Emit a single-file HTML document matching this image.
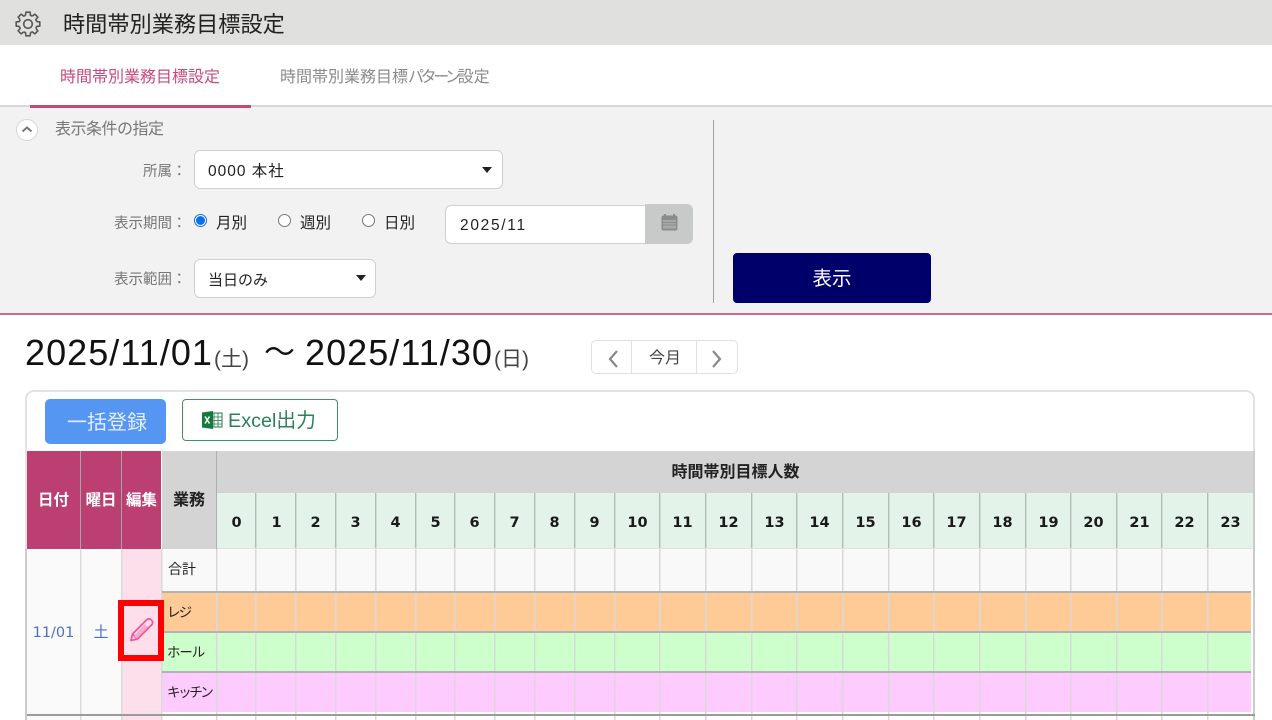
<!DOCTYPE html>
<html lang="ja"><head><meta charset="utf-8"><title>時間帯別業務目標設定</title>
<style>
html,body{margin:0;padding:0;background:#fff;overflow:hidden;width:1272px;height:720px}
#w{width:1272px;height:720px;overflow:hidden;position:relative;font-family:"Liberation Sans","Noto Sans CJK JP",sans-serif;color:#222}
.a{position:absolute}
.t{position:absolute;white-space:nowrap;line-height:1}
.c{position:absolute;text-align:center;white-space:nowrap;line-height:1}
.h{font-family:"DejaVu Sans",sans-serif;font-weight:bold;font-size:14.5px;top:516px;color:#1a1a1a}
.v{position:absolute;top:549px;height:171px;width:1px;background:#d9d9d9;box-shadow:1px 0 0 rgba(217,217,217,.5)}
.vh{position:absolute;top:493px;height:55px;width:1px;background:#b4bcb7;box-shadow:1px 0 0 rgba(180,188,183,.4)}
.sel{position:absolute;background:#fff;border:1px solid #cfcfcf;border-radius:6px;box-sizing:border-box}
.arr{position:absolute;width:0;height:0;border-left:5px solid transparent;border-right:5px solid transparent;border-top:6px solid #222}
.lb{color:#777;font-size:14.5px}
.rd{position:absolute;width:13px;height:13px;border:1px solid #777;border-radius:50%;background:#fff;box-sizing:border-box}
.k{letter-spacing:-3.4px}
</style></head><body><div id="w">

<div class="a" style="left:0;top:0;width:1272px;height:45px;background:#e0e0de"></div>
<svg class="a" style="left:15px;top:11px" width="26" height="26" viewBox="-13 -13 26 26" fill="none" stroke="#555" stroke-width="1.6" stroke-linejoin="round">
<path d="M-2.480-8.650L-2.080-11.820H2.080L2.480-8.650L4.360-7.870"/>
<path transform="rotate(45)" d="M-2.480-8.650L-2.080-11.820H2.080L2.480-8.650L4.360-7.870"/>
<path transform="rotate(90)" d="M-2.480-8.650L-2.080-11.820H2.080L2.480-8.650L4.360-7.870"/>
<path transform="rotate(135)" d="M-2.480-8.650L-2.080-11.820H2.080L2.480-8.650L4.360-7.870"/>
<path transform="rotate(180)" d="M-2.480-8.650L-2.080-11.820H2.080L2.480-8.650L4.360-7.870"/>
<path transform="rotate(225)" d="M-2.480-8.650L-2.080-11.820H2.080L2.480-8.650L4.360-7.870"/>
<path transform="rotate(270)" d="M-2.480-8.650L-2.080-11.820H2.080L2.480-8.650L4.360-7.870"/>
<path transform="rotate(315)" d="M-2.480-8.650L-2.080-11.820H2.080L2.480-8.650L4.360-7.870"/>
<circle r="4.300"/></svg>
<div class="t" style="left:63px;top:14px;font-size:22.2px;color:#222">時間帯別業務目標設定</div>

<div class="t" style="left:60px;top:70px;font-size:16px;color:#c9487c">時間帯別業務目標設定</div>
<div class="t" style="left:280px;top:70px;font-size:16px;color:#8a8a8a">時間帯別業務目標<span class="k">パターン</span>設定</div>

<div class="a" style="left:0;top:105px;width:1272px;height:208px;background:#f2f2f2"></div>
<div class="a" style="left:0;top:105px;width:1272px;height:2px;background:#d8d8d8"></div>
<div class="a" style="left:30px;top:105px;width:221px;height:3px;background:#c04a78"></div>
<div class="a" style="left:0;top:313px;width:1272px;height:2px;background:#cf6a92"></div>

<div class="a" style="left:16px;top:119px;width:22px;height:22px;border-radius:50%;background:#fff;border:1px solid #d6d6d6;box-sizing:border-box"></div>
<svg class="a" style="left:16px;top:119px" width="22" height="22" viewBox="0 0 22 22" fill="none" stroke="#777" stroke-width="2"><path d="M6.500 12.500L11 8.500l4.500 4"/></svg>
<div class="t" style="left:55px;top:122px;font-size:16px;color:#777;letter-spacing:-.5px">表示条件の指定</div>

<div class="t lb" style="left:143px;top:165px">所属：</div>
<div class="sel" style="left:194px;top:150px;width:309px;height:39px"></div>
<div class="t" style="left:208px;top:164px;font-size:15.500px;color:#222;letter-spacing:1px">0000 本社</div>
<div class="arr" style="left:482px;top:167px"></div>

<div class="t lb" style="left:114px;top:217px">表示期間：</div>
<div class="rd" style="left:194px;top:214px;border:1px solid #0a6fe8"></div>
<div class="a" style="left:196px;top:216px;width:9px;height:9px;border-radius:50%;background:#0a6fe8"></div>
<div class="t" style="left:216px;top:216px;font-size:15.500px">月別</div>
<div class="rd" style="left:278px;top:214px"></div>
<div class="t" style="left:300px;top:216px;font-size:15.500px">週別</div>
<div class="rd" style="left:362px;top:214px"></div>
<div class="t" style="left:384px;top:216px;font-size:15.500px">日別</div>

<div class="sel" style="left:445px;top:205px;width:210px;height:39px;border-radius:6px 0 0 6px"></div>
<div class="t" style="left:460px;top:218px;font-size:15.500px;letter-spacing:1.700px">2025/11</div>
<div class="a" style="left:645px;top:204px;width:48px;height:40px;background:#c8c9c9;border-radius:0 6px 6px 0"></div>
<svg class="a" style="left:660px;top:213px" width="19" height="19" viewBox="0 0 19 19"><rect x="1.500" y="2.500" width="16" height="15" rx="2" fill="#8b8b8b"/><rect x="4" y="1" width="2" height="3" fill="#8b8b8b"/><rect x="13" y="1" width="2" height="3" fill="#8b8b8b"/><rect x="3" y="7" width="13" height="8.500" fill="#a8a8a8"/><path d="M3 9.500h13M3 12h13" stroke="#8b8b8b"/></svg>

<div class="t lb" style="left:114px;top:273px">表示範囲：</div>
<div class="sel" style="left:194px;top:259px;width:182px;height:39px"></div>
<div class="t" style="left:208px;top:273px;font-size:15px">当日のみ</div>
<div class="arr" style="left:356px;top:275px"></div>

<div class="a" style="left:713px;top:120px;width:1px;height:183px;background:#a0a0a0"></div>
<div class="a" style="left:733px;top:253px;width:198px;height:50px;background:#00006b;border-radius:4px"></div>
<div class="c" style="left:733px;top:270px;width:198px;font-size:19.500px;color:#fff">表示</div>

<div class="t" style="left:25px;top:335px;font-size:36px;color:#111;letter-spacing:1.050px">2025/11/01</div>
<div class="t" style="left:214px;top:349px;font-size:21px;color:#444">(土)</div>
<div class="t" style="left:264px;top:337px;font-size:31px;color:#111">～</div>
<div class="t" style="left:305px;top:335px;font-size:36px;color:#111;letter-spacing:1.050px">2025/11/30</div>
<div class="t" style="left:494px;top:349px;font-size:21px;color:#444">(日)</div>

<div class="a" style="left:591px;top:340px;width:147px;height:34px;border:1px solid #e0e0e0;border-radius:5px;box-sizing:border-box"></div>
<div class="a" style="left:631px;top:340px;width:1px;height:34px;background:#e0e0e0"></div>
<div class="a" style="left:696px;top:340px;width:1px;height:34px;background:#e0e0e0"></div>
<svg class="a" style="left:605px;top:349px" width="16" height="20" viewBox="0 0 16 20" fill="none" stroke="#888" stroke-width="2.200"><path d="M12 2L5 10l7 8"/></svg>
<svg class="a" style="left:709px;top:349px" width="16" height="20" viewBox="0 0 16 20" fill="none" stroke="#888" stroke-width="2.200"><path d="M4 2l7 8-7 8"/></svg>
<div class="c" style="left:633px;top:351px;width:64px;font-size:16px;color:#444">今月</div>

<div class="a" style="left:25px;top:390px;width:1230px;height:340px;border:2px solid #e2e2e2;border-radius:9px;box-sizing:border-box"></div>

<div class="a" style="left:45px;top:399px;width:121px;height:45px;background:#5596f2;border-radius:5px"></div>
<div class="c" style="left:45px;top:413px;width:124px;font-size:20px;color:#e4eefc">一括登録</div>
<div class="a" style="left:182px;top:399px;width:156px;height:42px;border:1px solid #3f9168;border-radius:4px;box-sizing:border-box;background:#fff"></div>
<svg class="a" style="left:202px;top:410px" width="21" height="20" viewBox="0 0 21 20"><rect x="8" y="3" width="12" height="14" fill="#fff" stroke="#1f7a45"/><path d="M12 3v14M16 3v14M8 7h12M8 10.500h12M8 14h12" stroke="#1f7a45" stroke-width=".8"/><path d="M0 2.500L11 1v18L0 17.500z" fill="#157a3c"/><path d="M3 6.500l4.500 7M7.500 6.500l-4.500 7" stroke="#fff" stroke-width="1.500"/></svg>
<div class="t" style="left:228px;top:412px;font-size:19.800px;color:#2b8258">Excel出力</div>

<!-- table header -->
<div class="a" style="left:27px;top:451px;width:134px;height:98px;background:#bc3f71"></div>
<div class="a" style="left:80px;top:451px;width:1px;height:98px;background:#a5a5a5"></div>
<div class="a" style="left:121px;top:451px;width:1px;height:98px;background:#a5a5a5"></div>
<div class="a" style="left:162px;top:451px;width:1093px;height:42px;background:#d3d4d3"></div>
<div class="a" style="left:162px;top:493px;width:54px;height:56px;background:#d3d4d3"></div>
<div class="a" style="left:216px;top:451px;width:1px;height:98px;background:#b0b0b0"></div>
<div class="a" style="left:217px;top:493px;width:1037px;height:55px;background:#e3f3e9"></div>
<div class="a" style="left:217px;top:548px;width:1037px;height:2px;background:#dfe4e1"></div>
<div class="a" style="left:1253px;top:451px;width:2px;height:269px;background:#cbcbcb"></div>

<div class="c" style="left:27px;top:493px;width:53px;font-size:15.500px;font-weight:bold;color:#fff">日付</div>
<div class="c" style="left:81px;top:493px;width:40px;font-size:15.500px;font-weight:bold;color:#fff">曜日</div>
<div class="c" style="left:122px;top:493px;width:39px;font-size:15.500px;font-weight:bold;color:#fff">編集</div>
<div class="c" style="left:162px;top:493px;width:54px;font-size:16px;font-weight:bold;color:#222">業務</div>
<div class="c" style="left:217px;top:465px;width:1037px;font-size:16px;font-weight:bold;color:#222">時間帯別目標人数</div>

<div class="c h" style="left:217px;width:39px">0</div>
<div class="c h" style="left:257px;width:39px">1</div>
<div class="c h" style="left:296px;width:39px">2</div>
<div class="c h" style="left:336px;width:39px">3</div>
<div class="c h" style="left:376px;width:39px">4</div>
<div class="c h" style="left:416px;width:39px">5</div>
<div class="c h" style="left:455px;width:39px">6</div>
<div class="c h" style="left:495px;width:39px">7</div>
<div class="c h" style="left:535px;width:39px">8</div>
<div class="c h" style="left:575px;width:39px">9</div>
<div class="c h" style="left:615px;width:45px">10</div>
<div class="c h" style="left:660px;width:45px">11</div>
<div class="c h" style="left:706px;width:45px">12</div>
<div class="c h" style="left:752px;width:45px">13</div>
<div class="c h" style="left:797px;width:45px">14</div>
<div class="c h" style="left:843px;width:45px">15</div>
<div class="c h" style="left:889px;width:45px">16</div>
<div class="c h" style="left:934px;width:45px">17</div>
<div class="c h" style="left:980px;width:45px">18</div>
<div class="c h" style="left:1026px;width:45px">19</div>
<div class="c h" style="left:1071px;width:45px">20</div>
<div class="c h" style="left:1117px;width:45px">21</div>
<div class="c h" style="left:1162px;width:45px">22</div>
<div class="c h" style="left:1208px;width:45px">23</div>

<!-- body -->
<div class="a" style="left:27px;top:549px;width:94px;height:171px;background:#fafafa"></div>
<div class="a" style="left:121px;top:549px;width:41px;height:171px;background:#fcdfeb"></div>
<div class="a" style="left:162px;top:549px;width:1091px;height:42px;background:#f9f9f9"></div>
<div class="a" style="left:162px;top:593px;width:1089px;height:38px;background:#fecb96"></div>
<div class="a" style="left:162px;top:633px;width:1089px;height:38px;background:#ccffcc"></div>
<div class="a" style="left:162px;top:673px;width:1089px;height:39px;background:#fecbff"></div>

<div class="v" style="left:80px;width:1px"></div><div class="v" style="left:121px;width:1px"></div><div class="v" style="left:161px"></div><div class="v" style="left:216px"></div>
<div class="v" style="left:255px"></div><div class="v" style="left:295px"></div><div class="v" style="left:335px"></div><div class="v" style="left:375px"></div><div class="v" style="left:415px"></div><div class="v" style="left:454px"></div><div class="v" style="left:494px"></div><div class="v" style="left:534px"></div><div class="v" style="left:574px"></div><div class="v" style="left:614px"></div><div class="v" style="left:659px"></div><div class="v" style="left:705px"></div><div class="v" style="left:751px"></div><div class="v" style="left:796px"></div><div class="v" style="left:842px"></div><div class="v" style="left:888px"></div><div class="v" style="left:933px"></div><div class="v" style="left:979px"></div><div class="v" style="left:1025px"></div><div class="v" style="left:1070px"></div><div class="v" style="left:1116px"></div><div class="v" style="left:1161px"></div><div class="v" style="left:1207px"></div>

<div class="vh" style="left:255px"></div><div class="vh" style="left:295px"></div><div class="vh" style="left:335px"></div><div class="vh" style="left:375px"></div><div class="vh" style="left:415px"></div><div class="vh" style="left:454px"></div><div class="vh" style="left:494px"></div><div class="vh" style="left:534px"></div><div class="vh" style="left:574px"></div><div class="vh" style="left:614px"></div><div class="vh" style="left:659px"></div><div class="vh" style="left:705px"></div><div class="vh" style="left:751px"></div><div class="vh" style="left:796px"></div><div class="vh" style="left:842px"></div><div class="vh" style="left:888px"></div><div class="vh" style="left:933px"></div><div class="vh" style="left:979px"></div><div class="vh" style="left:1025px"></div><div class="vh" style="left:1070px"></div><div class="vh" style="left:1116px"></div><div class="vh" style="left:1161px"></div><div class="vh" style="left:1207px"></div>

<div class="a" style="left:162px;top:591px;width:1089px;height:2px;background:#b3b3b3"></div>
<div class="a" style="left:162px;top:631px;width:1089px;height:2px;background:#b3b3b3"></div>
<div class="a" style="left:162px;top:671px;width:1089px;height:2px;background:#b3b3b3"></div>
<div class="a" style="left:25px;top:549px;width:2px;height:171px;background:#cbcbcb"></div>
<div class="a" style="left:27px;top:714px;width:1228px;height:2px;background:#9b9b9b"></div>

<div class="c" style="left:27px;top:626px;width:53px;font-size:14.500px;color:#4a70c8;font-family:'DejaVu Sans',sans-serif;letter-spacing:0">11/01</div>
<div class="c" style="left:81px;top:625px;width:40px;font-size:15px;color:#4a70c8">土</div>
<div class="t" style="left:168px;top:562px;font-size:14px;color:#222">合計</div>
<div class="t" style="left:167px;top:606px;font-size:13.500px;color:#222;letter-spacing:-1.800px">レジ</div>
<div class="t" style="left:167px;top:646px;font-size:13.500px;color:#222;letter-spacing:-1.100px">ホール</div>
<div class="t" style="left:167px;top:686px;font-size:13.500px;color:#222;letter-spacing:-2.400px">キッチン</div>

<div class="a" style="left:118px;top:600px;width:46px;height:61px;border:6px solid #f00;box-sizing:border-box"></div>
<svg class="a" style="left:128px;top:616px" width="28" height="28" viewBox="0 0 28 28" fill="none" stroke="#f0569a" stroke-width="1.800" stroke-linejoin="round"><path d="M3 24.500l1.500-6.500L18.500 4c1.500-1.500 3.500-1.500 5 0s1.500 3.500 0 5L9.500 23z"/><path d="M4.500 18l5 5"/><path d="M6 20l11-12 3 3L9 22.500z" fill="#f8a9cc" stroke="none"/></svg>

</div></body></html>
